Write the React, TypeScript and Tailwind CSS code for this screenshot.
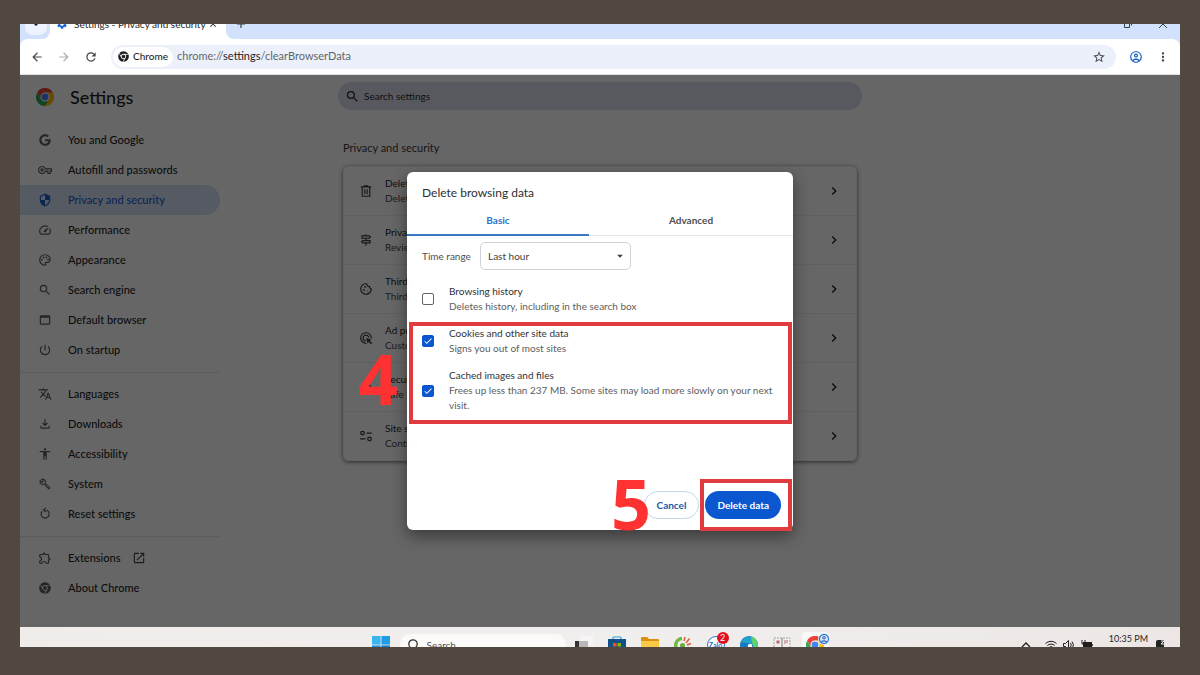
import React, { useState } from "react";
import type { ReactNode } from "react";
import {
  MdArrowBack,
  MdArrowForward,
  MdRefresh,
  MdStarBorder,
  MdOutlineAccountCircle,
  MdMoreVert,
  MdSearch,
  MdSecurity,
  MdOutlineSpeed,
  MdOutlinePalette,
  MdWebAsset,
  MdPowerSettingsNew,
  MdTranslate,
  MdOutlineFileDownload,
  MdAccessibility,
  MdOutlineBuild,
  MdOutlineExtension,
  MdOpenInNew,
  MdOutlineSignpost,
  MdOutlineCookie,
  MdOutlineAdsClick,
  MdOutlineLock,
  MdOutlineVpnKey,
  MdChevronRight,
  MdSettings,
  MdClose,
  MdAdd,
  MdExpandMore,
  MdCheck,
  MdArrowDropDown,
} from "react-icons/md";
import { FaGoogle, FaChrome } from "react-icons/fa";

function ChromeLogo({ className }: { className: string }) {
  return (
    <svg viewBox="0 0 48 48" className={className} aria-hidden="true">
      <path d="M24 24V48A24 24 0 0 0 44.8 12H24Z" fill="#fbbc04" />
      <path d="M24 12H44.8A24 24 0 0 0 3.2 12L13.6 30Z" fill="#ea4335" />
      <path d="M34.4 30 24 48A24 24 0 0 1 3.2 12L13.6 30Z" fill="#34a853" />
      <circle cx="24" cy="24" r="12" fill="#fff" />
      <circle cx="24" cy="24" r="9.2" fill="#4285f4" />
    </svg>
  );
}

function TrashIcon() {
  return (
    <svg viewBox="0 0 24 24" className="size-3.5" fill="none" stroke="currentColor" strokeWidth="2" aria-hidden="true">
      <path d="M3 5h18M9 4V3h6v1M5.500 5.500V21h13V5.500M10 9v8.500M14 9v8.500" />
    </svg>
  );
}

function SiteSettingsIcon() {
  return (
    <svg viewBox="0 0 24 24" className="size-3.5" fill="none" stroke="currentColor" strokeWidth="2.2" aria-hidden="true">
      <circle cx="6" cy="7" r="3" />
      <path d="M13 7h9M2 17h9" />
      <circle cx="18" cy="17" r="3" />
    </svg>
  );
}

function ResetIcon() {
  return (
    <svg viewBox="0 0 24 24" className="size-3.5" fill="none" stroke="currentColor" strokeWidth="2" aria-hidden="true">
      <path d="M7 7.500a7 7 0 1 0 6-2.400" />
      <path d="M13.500 1.500 9.500 5l4 3.500" />
    </svg>
  );
}

type Item = { label: string; icon: ReactNode; external?: boolean };

const groups: Item[][] = [
  [
    { label: "You and Google", icon: <FaGoogle className="size-3" /> },
    { label: "Autofill and passwords", icon: <MdOutlineVpnKey className="size-3.5" /> },
    { label: "Privacy and security", icon: <MdSecurity className="size-3.5" /> },
    { label: "Performance", icon: <MdOutlineSpeed className="size-3.5" /> },
    { label: "Appearance", icon: <MdOutlinePalette className="size-3.5" /> },
    { label: "Search engine", icon: <MdSearch className="size-3.5" /> },
    { label: "Default browser", icon: <MdWebAsset className="size-3.5" /> },
    { label: "On startup", icon: <MdPowerSettingsNew className="size-3.5" /> },
  ],
  [
    { label: "Languages", icon: <MdTranslate className="size-3.5" /> },
    { label: "Downloads", icon: <MdOutlineFileDownload className="size-3.5" /> },
    { label: "Accessibility", icon: <MdAccessibility className="size-3.5" /> },
    { label: "System", icon: <MdOutlineBuild className="size-3" /> },
    { label: "Reset settings", icon: <ResetIcon /> },
  ],
  [
    { label: "Extensions", icon: <MdOutlineExtension className="size-3.5" />, external: true },
    { label: "About Chrome", icon: <FaChrome className="size-3" /> },
  ],
];

const cards = [
  { title: "Delete browsing data", sub: "Delete history, cookies, cache, and more", icon: <TrashIcon /> },
  { title: "Privacy Guide", sub: "Review key privacy and security controls", icon: <MdOutlineSignpost className="size-3.5" /> },
  { title: "Third-party cookies", sub: "Third-party cookies are blocked", icon: <MdOutlineCookie className="size-3.5" /> },
  { title: "Ad privacy", sub: "Customize the info used by sites", icon: <MdOutlineAdsClick className="size-3.5" /> },
  { title: "Security", sub: "Safe Browsing and other settings", icon: <MdOutlineLock className="size-3.5" /> },
  { title: "Site settings", sub: "Controls what sites can use", icon: <SiteSettingsIcon /> },
];

function TabStrip() {
  return (
    <div className="flex h-[15px] items-end overflow-hidden bg-white">
      <div className="flex h-[30px] items-center rounded-br-lg bg-[#d3e2fc] pr-[3px] pl-[5px]">
        <button aria-label="Search tabs" className="flex size-[22px] items-center justify-center rounded-lg bg-[#edf2fc]">
          <MdExpandMore className="size-3" />
        </button>
      </div>
      <div className="flex h-[30px] w-[176px] items-center pr-2 pl-[6px] text-[10px] text-[#1f1f1f]">
        <MdSettings className="mr-1.5 size-3 shrink-0 text-[#1a66d2]" />
        <span className="grow whitespace-nowrap">Settings - Privacy and security</span>
        <button aria-label="Close tab">
          <MdClose className="size-2.5" />
        </button>
      </div>
      <div className="flex h-[30px] grow items-center rounded-bl-lg bg-[#d3e2fc] pr-3 pl-2 text-[#3c4043]">
        <button aria-label="New tab">
          <MdAdd className="size-3.5" />
        </button>
        <div className="ml-auto flex items-center gap-[25px]">
          <button aria-label="Restore window">
            <svg viewBox="0 0 10 10" className="size-2.5" fill="none" stroke="currentColor" aria-hidden="true">
              <path d="M1.5 3.5h5v5h-5zM3.5 1.5h5v5" />
            </svg>
          </button>
          <button aria-label="Close window">
            <svg viewBox="0 0 10 10" className="size-2.5" stroke="currentColor" aria-hidden="true">
              <path d="m1 1 8 8M9 1 1 9" />
            </svg>
          </button>
        </div>
      </div>
    </div>
  );
}

function Toolbar() {
  return (
    <div className="bg-[#d3e2fc]">
      <div className="flex h-9 items-center rounded-t-lg border-b border-[#dfe3ea] bg-white pr-2.5 pl-2.5 text-[#47484b]">
        <div className="flex items-center gap-[13px]">
          <button aria-label="Back"><MdArrowBack className="size-3.5" /></button>
          <button aria-label="Forward" className="text-[#a9abae]"><MdArrowForward className="size-3.5" /></button>
          <button aria-label="Reload"><MdRefresh className="size-3.5" /></button>
        </div>
        <div className="mr-[13px] ml-[13px] flex h-6 grow items-center rounded-full bg-[#ebf0fa] pr-2.5 pl-[2px]">
          <div className="flex h-5 items-center gap-1 rounded-full bg-white px-[5px] text-[10px] font-medium text-[#1f1f1f]">
            <FaChrome className="size-[11px]" />
            Chrome
          </div>
          <div className="ml-1 grow text-[11px] text-[#62666c]">
            chrome://<span className="text-[#1f1f1f]">settings</span>/clearBrowserData
          </div>
          <button aria-label="Bookmark this tab"><MdStarBorder className="size-3.5" /></button>
        </div>
        <div className="flex items-center gap-[13px]">
          <button aria-label="Profile" className="text-[#1a5fc4]"><MdOutlineAccountCircle className="size-3.5" /></button>
          <button aria-label="Menu"><MdMoreVert className="size-3.5" /></button>
        </div>
      </div>
    </div>
  );
}

function Sidebar() {
  return (
    <aside className="w-[200px] shrink-0">
      <div className="flex h-[50px] items-center gap-4 pb-1.5 pl-4">
        <ChromeLogo className="size-[18px]" />
        <h1 className="text-[18px] font-medium text-[#1f1f1f]">Settings</h1>
      </div>
      <nav>
        {groups.map((group, index) => (
          <div key={index} className={index > 0 ? "mt-[7px] border-t border-[#e6e6e6] pt-1.5" : ""}>
            {group.map((item) => (
              <a
                key={item.label}
                href="#"
                className={
                  item.label === "Privacy and security"
                    ? "flex h-[30px] items-center gap-4 rounded-r-full bg-[#d5e1f8] pl-[18px] text-[11px] font-medium text-[#1d5fc8]"
                    : "flex h-[30px] items-center gap-4 pl-[18px] text-[11px] font-medium text-[#1f1f1f]"
                }
              >
                <span className={item.label === "Privacy and security" ? "flex w-3.5 justify-center" : "flex w-3.5 justify-center text-[#5a5c5e]"}>
                  {item.icon}
                </span>
                {item.label}
                {item.external && <MdOpenInNew className="-ml-1 size-3.5 text-[#474747]" />}
              </a>
            ))}
          </div>
        ))}
      </nav>
    </aside>
  );
}

function SettingsMain() {
  return (
    <main className="grow pr-[200px]">
      <div className="mx-auto max-w-[524px] pt-[7px]">
        <label className="flex h-7 items-center gap-1 rounded-full bg-[#d9deea] pl-[7px] text-[#2c2c2c]">
          <MdSearch className="size-[15px]" />
          <input
            aria-label="Search settings"
            placeholder="Search settings"
            className="grow bg-transparent text-[10px] placeholder:text-[#2c2c2c] focus:outline-none"
          />
        </label>
        <div className="px-[5px]">
          <h2 className="pt-[30px] pb-2.5 text-[11px] leading-4 text-[#3a3a3a]">Privacy and security</h2>
          <ul className="rounded-md border border-[#f4f4f4] shadow-[0_1px_4px_rgba(0,0,0,0.6)]">
            {cards.map((card, index) => (
              <li key={card.title} className={index > 0 ? "border-t border-[#efefef]" : ""}>
                <a href="#" className="flex h-12 items-center gap-3 pr-[14px] pl-[15px] text-[#3a3c3e]">
                  {card.icon}
                  <span className="grow text-[10px] leading-[15px]">
                    <span className="block text-[#1f1f1f]">{card.title}</span>
                    <span className="block text-[#4a4a4a]">{card.sub}</span>
                  </span>
                  <MdChevronRight className="size-4 text-[#1f1f1f]" />
                </a>
              </li>
            ))}
          </ul>
        </div>
      </div>
    </main>
  );
}

const options = [
  { id: "history", title: "Browsing history", sub: "Deletes history, including in the search box" },
  { id: "cookies", title: "Cookies and other site data", sub: "Signs you out of most sites" },
  { id: "cache", title: "Cached images and files", sub: "Frees up less than 237 MB. Some sites may load more slowly on your next visit." },
];

function DeleteDialog() {
  const [checked, setChecked] = useState<Record<string, boolean>>({ cookies: true, cache: true });
  return (
    <div
      role="dialog"
      aria-label="Delete browsing data"
      className="relative flex min-h-[358px] w-[386px] flex-col rounded-md bg-white shadow-[0_6px_16px_rgba(0,0,0,0.45)]"
    >
      <h2 className="px-[15px] pt-3 text-[12px] leading-[18px] text-[#2d2f31]">Delete browsing data</h2>
      <div role="tablist" className="mt-1 flex text-[10px] font-bold">
        <button role="tab" aria-selected="true" className="h-[30px] w-[182px] border-b-2 border-[#3c78c4] text-[#2a75d0]">
          Basic
        </button>
        <button role="tab" aria-selected="false" className="h-[30px] grow border-b border-[#e4e6e9] text-[#4c4e51]">
          Advanced
        </button>
      </div>
      <div className="mt-1.5 flex items-center pl-[15px]">
        <label htmlFor="range" className="w-[58px] text-[10px] text-[#4c4e51]">Time range</label>
        <div className="grid items-center">
          <select
            id="range"
            className="col-start-1 row-start-1 h-7 w-[151px] appearance-none rounded-[5px] border border-[#d0d3d7] bg-white px-[7px] text-[10px] text-[#3c3e41]"
          >
            <option>Last hour</option>
          </select>
          <MdArrowDropDown className="pointer-events-none col-start-1 row-start-1 mr-1 size-3.5 justify-self-end text-[#3c3e41]" />
        </div>
      </div>
      <div className="mt-[14px] flex flex-col gap-3 pr-5 pl-[15px]">
        {options.map((option) => (
          <label key={option.id} className="flex items-center gap-[15px]">
            <span className="grid shrink-0 place-items-center">
              <input
                type="checkbox"
                checked={!!checked[option.id]}
                onChange={(event) => setChecked({ ...checked, [option.id]: event.target.checked })}
                className="col-start-1 row-start-1 size-3 appearance-none rounded-[2px] border border-[#63666a] checked:border-[#0b57d0] checked:bg-[#0b57d0]"
              />
              <MdCheck className="pointer-events-none col-start-1 row-start-1 size-2.5 text-white" />
            </span>
            <span className="text-[10px] leading-[15px]">
              <span className="block text-[#303235]">{option.title}</span>
              <span className="block text-[#5b5e62]">{option.sub}</span>
            </span>
          </label>
        ))}
      </div>
      <div className="mt-auto flex justify-end gap-1.5 pr-3 pb-[11px] text-[10px] font-bold">
        <button className="h-7 rounded-full border border-[#c3d8ee] px-3 text-[#2458a8]">Cancel</button>
        <button className="h-7 rounded-full bg-[#0b57d0] px-3 text-white">Delete data</button>
      </div>

      <div className="pointer-events-none absolute top-[150px] right-[1px] left-[2px] h-[102px] border-4 border-[#e03c40]" />
      <div className="pointer-events-none absolute right-[1px] -bottom-px h-[52px] w-[92px] border-4 border-[#e03c40]" />
      <span className="pointer-events-none absolute top-[171px] -left-[49px] font-['Open_Sans'] text-[70px] leading-[70px] font-bold text-[#ff3131]">4</span>
      <span className="pointer-events-none absolute top-[296px] left-[204px] font-['Open_Sans'] text-[70px] leading-[70px] font-bold text-[#ff3131]">5</span>
    </div>
  );
}

function PinnedApps() {
  return (
    <div className="flex items-center gap-[15px]">
      <svg viewBox="0 0 18 18" className="size-[18px]" aria-hidden="true">
        <path d="M0 5h11v8H0z" fill="#333" />
        <path d="M5 0h13v9H5z" fill="#f5f5f5" />
        <path d="M4 5h9v11H4z" fill="#b8b8b8" />
      </svg>
      <svg viewBox="0 0 18 18" className="size-[18px]" aria-hidden="true">
        <path d="M5 4V1.8Q5 1 6 1h6q1 0 1 .8V4" fill="none" stroke="#2ba3e0" strokeWidth="1.2" />
        <path d="M0 3h18v12q0 2-2 2H2q-2 0-2-2z" fill="#125186" />
        <path d="M5 7h3.5v3.500H5z" fill="#f25022" />
        <path d="M9.500 7H13v3.500H9.500z" fill="#7fba00" />
        <path d="M5 11.500h3.500V15H5z" fill="#00a4ef" />
        <path d="M9.500 11.500H13V15H9.500z" fill="#ffb900" />
      </svg>
      <svg viewBox="0 0 18 18" className="size-[18px]" aria-hidden="true">
        <path d="M0 2q0-1 1-1h5l2 2h9q1 0 1 1v4H0z" fill="#d9920e" />
        <path d="M0 5h18v10q0 1-1 1H1q-1 0-1-1z" fill="#fac945" />
      </svg>
      <svg viewBox="0 0 18 18" className="size-[18px]" fill="none" aria-hidden="true">
        <path d="M8 2.500A7 7 0 1 0 15.500 11" stroke="#6fb93f" strokeWidth="3.400" />
        <circle cx="8.500" cy="9.500" r="2.500" fill="#5fb236" />
        <path d="m10 5 1-4M12 7l3.500-4.500M13 9l4-1.500" stroke="#d9603a" strokeWidth="1.500" />
      </svg>
      <div className="relative flex size-[18px] items-center justify-center rounded-full border border-[#2c6fd0] bg-white">
        <span className="text-[7px] font-bold text-[#1767d2]">Zalo</span>
        <span className="absolute -top-[5px] left-[9px] flex size-3 items-center justify-center rounded-full bg-[#e01020] text-[9px] text-white">2</span>
      </div>
      <svg viewBox="0 0 18 18" className="size-[18px]" aria-hidden="true">
        <circle cx="9" cy="9" r="9" fill="#1479c9" />
        <path d="M1 6A9 9 0 0 1 18 9q0 4-5 4 1-5-4-6-5 0-8-1z" fill="#23a5c9" />
        <path d="M11 .3A9 9 0 0 1 18 9q0 4-5 4 1-4-1-6z" fill="#5fd36b" />
        <circle cx="10" cy="10" r="2.200" fill="#fff" />
      </svg>
      <svg viewBox="0 0 18 18" className="size-[18px]" fill="none" aria-hidden="true">
        <path d="M1 2h16v14H1z" fill="#f2eeee" stroke="#a8a2a2" strokeDasharray="2 1" />
        <path d="M9 2v12" stroke="#777" />
        <path d="M3.500 4.500h3v3h-3z" fill="#b86a72" />
        <path d="M12 4v4M14 4v3" stroke="#b86a72" />
      </svg>
      <div className="relative -ml-1 flex h-[26px] w-[27px] items-center justify-center rounded-sm bg-[#f8f8f8]">
        <ChromeLogo className="size-[18px]" />
        <MdOutlineAccountCircle className="absolute top-px -right-px size-3 rounded-full bg-[#dce9fb] text-[#2b68c0]" />
      </div>
    </div>
  );
}

function Taskbar() {
  return (
    <footer className="h-5 overflow-hidden bg-linear-to-r from-[#f0ecea] via-[#f1efee] to-[#ece7e5] text-[#1f1f1f]">
      <div className="grid h-9 grid-cols-[1fr_auto_1fr] items-center">
        <div />
        <div className="flex items-center">
          <svg viewBox="0 0 18 18" className="size-[18px]" aria-hidden="true">
            <path d="M0 0h8.600v8.600H0z" fill="#3cb4ee" />
            <path d="M9.400 0H18v8.600H9.400z" fill="#1f9de6" />
            <path d="M0 9.400h8.600V18H0z" fill="#1e94de" />
            <path d="M9.400 9.400H18V18H9.400z" fill="#0f7fd0" />
          </svg>
          <label className="mr-[9px] ml-2.5 flex h-[22px] w-[166px] items-center gap-2 rounded-full bg-[#fbfaf9] pl-[7px]">
            <svg viewBox="0 0 12 12" className="size-3" fill="none" stroke="#333" strokeWidth="1.300" aria-hidden="true">
              <circle cx="6" cy="5" r="4.200" />
              <path d="m3 8-2.500 3" />
            </svg>
            <input aria-label="Search" placeholder="Search" className="w-24 bg-transparent text-[10px] placeholder:text-[#555] focus:outline-none" />
          </label>
          <PinnedApps />
        </div>
        <div className="flex h-9 items-center justify-end gap-1.5 pr-3.5">
          <svg viewBox="0 0 10 10" className="mr-2 size-2.5" fill="none" stroke="currentColor" strokeWidth="1.300" aria-hidden="true">
            <path d="M1 7 5 3l4 4" />
          </svg>
          <svg viewBox="0 0 12 12" className="size-3" fill="none" stroke="currentColor" aria-hidden="true">
            <path d="M.5 4.500a8 8 0 0 1 11 0M2.300 6.500a5.500 5.500 0 0 1 7.400 0M4 8.500a3 3 0 0 1 4 0" />
            <circle cx="6" cy="10" r=".8" fill="currentColor" />
          </svg>
          <svg viewBox="0 0 12 12" className="size-3" fill="none" stroke="currentColor" aria-hidden="true">
            <path d="M.5 4.500h2l3-3v9l-3-3h-2zM7.500 4q1.500 2 0 4M9 2.500q3 3.500 0 7" />
          </svg>
          <svg viewBox="0 0 12 12" className="size-3" aria-hidden="true">
            <path d="M2 3h9v6H2zM11.200 5h.8v2h-.8z" fill="currentColor" />
            <path d="M1 1v4h3V1" fill="none" stroke="currentColor" />
          </svg>
          <span className="ml-2.5 self-start text-[9px] leading-6">10:35 PM</span>
          <svg viewBox="0 0 12 12" className="size-3" aria-hidden="true">
            <path d="M2 3q0-2 2-2h6v8l-4 2-4-1z" fill="#222" />
            <path d="M7 2h3L7 5h3" fill="none" stroke="#eee" />
          </svg>
        </div>
      </div>
    </footer>
  );
}

export default function App() {
  return (
    <div className="flex min-h-screen flex-col bg-[#51483f] px-5 pt-6 pb-7 font-['Lato','Open_Sans',sans-serif]">
      <div className="flex grow flex-col overflow-hidden bg-white">
        <TabStrip />
        <Toolbar />
        <div className="relative flex grow flex-col overflow-hidden">
          <div className="flex grow">
            <Sidebar />
            <SettingsMain />
          </div>
          <div className="absolute inset-0 flex items-center justify-center bg-black/60">
            <DeleteDialog />
          </div>
        </div>
        <Taskbar />
      </div>
    </div>
  );
}
